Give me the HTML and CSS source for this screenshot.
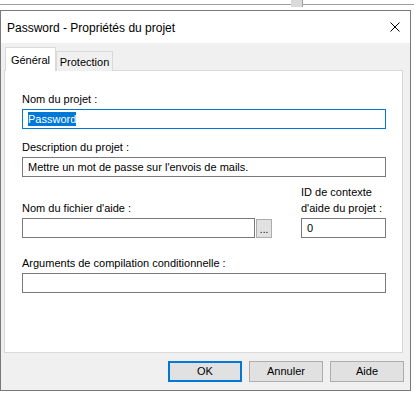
FILE: index.html
```html
<!DOCTYPE html>
<html lang="fr">
<head>
    <meta charset="UTF-8">
    <title>Password - Propriétés du projet</title>
    <link rel="stylesheet" href="styles.css">
</head>
<body>
<div class="backdrop">
    <span class="line"></span>
    <span class="knob"></span>
    <span class="line grow"></span>
</div>
<div class="dialog">
    <div class="titlebar">
        <span class="title">Password - Propriétés du projet</span>
        <svg class="close" width="10" height="10" viewBox="0 0 10 10">
            <path d="M0.5 0.5 L9.5 9.5 M9.5 0.5 L0.5 9.5" stroke="#000" stroke-width="1" fill="none"/>
        </svg>
    </div>
    <div class="body">
        <div class="tabs">
            <div class="tab active">Général</div>
            <div class="tab">Protection</div>
        </div>
        <div class="panel">
            <div class="lbl">Nom du projet :</div>
            <div class="field focus"><span class="sel">Password</span></div>

            <div class="lbl gap">Description du projet :</div>
            <div class="field">Mettre un mot de passe sur l'envois de mails.</div>

            <div class="row">
                <div class="col-left">
                    <div class="lbl tall">Nom du fichier d'aide :</div>
                    <div class="inline">
                        <div class="field help">&nbsp;</div>
                        <div class="browse">...</div>
                    </div>
                </div>
                <div class="col-right">
                    <div class="lbl tall">ID de contexte<br>d'aide du projet :</div>
                    <div class="field">0</div>
                </div>
            </div>

            <div class="lbl gap-lg">Arguments de compilation conditionnelle :</div>
            <div class="field">&nbsp;</div>
        </div>
        <div class="buttons">
            <div class="btn default">OK</div>
            <div class="btn">Annuler</div>
            <div class="btn">Aide</div>
        </div>
    </div>
</div>
</body>
</html>
```

FILE: styles.css
```css
body {
    margin: 0;
    width: 414px;
    height: 396px;
    overflow: hidden;
    background: #fff;
    color: #000;
    font-family: "Liberation Sans", Arial, sans-serif;
    font-size: 11px;
}
.backdrop {
    display: flex;
    height: 10px;
}
.line {
    width: 291px;
    height: 4px;
    border-bottom: 1px solid #a0a0a0;
}
.line.grow {
    flex: 1;
}
.knob {
    width: 11px;
    height: 7px;
    background: #dadada;
    border-right: 1px solid #a0a0a0;
}
.dialog {
    width: 411px;
    height: 381px;
    box-sizing: border-box;
    border: 1px solid #7a7a7a;
    display: flex;
    flex-direction: column;
}
.titlebar {
    height: 32px;
    background: #fff;
    display: flex;
    align-items: center;
    justify-content: space-between;
    padding: 0 10px 0 6px;
}
.title {
    font-size: 12px;
    padding-top: 2px;
}
.body {
    flex: 1;
    background: #f0f0f0;
    padding: 4px 7px 0 3px;
}
.tabs {
    display: flex;
    align-items: flex-end;
    height: 24px;
    margin-bottom: -1px;
}
.tab {
    box-sizing: border-box;
    width: 57px;
    height: 20px;
    border: 1px solid #d9d9d9;
    border-bottom: none;
    text-align: center;
    line-height: 21px;
    background: #f0f0f0;
}
.tab.active {
    width: 51px;
    height: 24px;
    margin-left: 1px;
    background: #fff;
    position: relative;
    z-index: 1;
    line-height: 24px;
}
.panel {
    height: 283px;
    box-sizing: border-box;
    border: 1px solid #d9d9d9;
    background: #fff;
    padding: 22px 16px 0 17px;
}
.lbl {
    line-height: 13px;
}
.lbl.gap {
    margin-top: 12px;
}
.lbl.gap-lg {
    margin-top: 19px;
}
.lbl.tall {
    line-height: 16px;
}
.field {
    box-sizing: border-box;
    height: 20px;
    border: 1px solid #7a7a7a;
    padding-left: 5px;
    line-height: 18px;
    margin-top: 3px;
    white-space: nowrap;
}
.field.focus {
    border-color: #0078d7;
}
.sel {
    display: inline-block;
    background: #0078d7;
    color: #fff;
    line-height: 14px;
}
.row {
    display: flex;
    align-items: flex-end;
    justify-content: space-between;
    margin-top: 7px;
}
.row .field {
    margin-top: 2px;
}
.col-left {
    width: 250px;
}
.inline {
    display: flex;
    align-items: center;
}
.field.help {
    width: 234px;
}
.browse {
    box-sizing: border-box;
    width: 16px;
    height: 19px;
    margin: 2px 0 0 1px;
    background: #e1e1e1;
    border: 1px solid #adadad;
    text-align: center;
    line-height: 20px;
    font-size: 10px;
}
.col-right {
    width: 85px;
}
.buttons {
    display: flex;
    justify-content: flex-end;
    gap: 7px;
    margin: 8px -1px 0 0;
}
.btn {
    box-sizing: border-box;
    width: 74px;
    height: 21px;
    background: #e1e1e1;
    border: 1px solid #adadad;
    text-align: center;
    line-height: 19px;
}
.btn.default {
    border: 2px solid #0078d7;
    line-height: 17px;
}
```
